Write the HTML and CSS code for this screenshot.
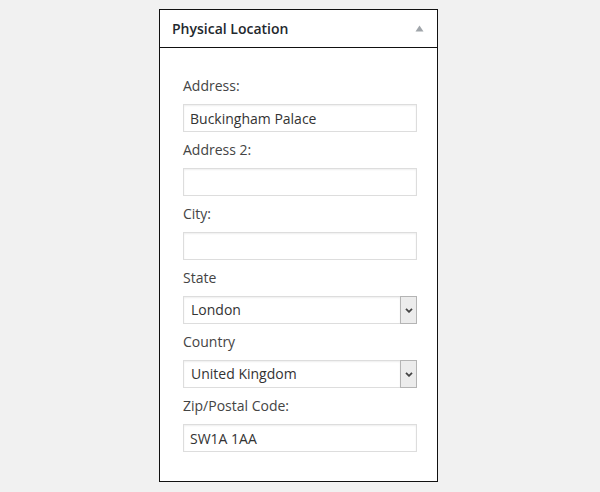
FILE: index.html
```html
<!DOCTYPE html>
<html>
<head>
<meta charset="utf-8">
<link rel="stylesheet" href="styles.css">
</head>
<body>
<div class="panel">
  <div class="panel-head">
    <h2 class="panel-title">Physical Location</h2>
    <span class="toggle"><svg width="9" height="7" viewBox="0 0 9 7"><path d="M4.5 0.5 L8.5 6.5 L0.5 6.5 Z" fill="#a0a5aa"/></svg></span>
  </div>
  <div class="panel-body">
    <label class="field-label">Address:</label>
    <input class="text-input" type="text" value="Buckingham Palace">
    <label class="field-label">Address 2:</label>
    <input class="text-input" type="text" value="">
    <label class="field-label">City:</label>
    <input class="text-input" type="text" value="">
    <label class="field-label">State</label>
    <div class="select-wrap">
      <div class="select-value">London</div>
      <div class="select-arrow"><svg width="8" height="5" viewBox="0 0 8 5"><path d="M1 0.8 L4 3.8 L7 0.8" fill="none" stroke="#444" stroke-width="1.8"/></svg></div>
    </div>
    <label class="field-label">Country</label>
    <div class="select-wrap">
      <div class="select-value">United Kingdom</div>
      <div class="select-arrow"><svg width="8" height="5" viewBox="0 0 8 5"><path d="M1 0.8 L4 3.8 L7 0.8" fill="none" stroke="#444" stroke-width="1.8"/></svg></div>
    </div>
    <label class="field-label">Zip/Postal Code:</label>
    <input class="text-input" type="text" value="SW1A 1AA">
  </div>
</div>
</body>
</html>
```
FILE: styles.css
```css
html, body {
  margin: 0;
  padding: 0;
  background: #f1f1f1;
  font-family: "Open Sans", "Liberation Sans", sans-serif;
}
body {
  padding-top: 9px;
  padding-left: 159px;
}
.panel {
  width: 277px;
  border: 1px solid #111;
  background: #fff;
}
.panel-head {
  height: 37px;
  border-bottom: 1px solid #111;
  display: flex;
  align-items: center;
  justify-content: space-between;
  padding: 0 13px 0 12px;
}
.panel-title {
  margin: 0;
  font-size: 14px;
  font-weight: 600;
  color: #23282d;
  line-height: 20px;
}
.toggle {
  display: flex;
  align-items: center;
  height: 10px;
}
.panel-body {
  padding: 28px 20px 29px 23px;
  display: flex;
  flex-direction: column;
}
.field-label {
  display: block;
  font-size: 14px;
  line-height: 20px;
  color: #444;
  margin: 8px 0 8px 0;
}
.field-label:first-child {
  margin-top: 0;
}
.text-input {
  box-sizing: border-box;
  width: 234px;
  height: 28px;
  margin: 0;
  border: 1px solid #ddd;
  box-shadow: inset 0 1px 2px rgba(0,0,0,0.07);
  padding: 0 6px;
  font-family: "Open Sans", "Liberation Sans", sans-serif;
  font-size: 14px;
  color: #333;
  background: #fff;
  outline: none;
}
.select-wrap {
  display: flex;
  width: 234px;
  height: 28px;
  box-sizing: border-box;
}
.select-value {
  flex: 1;
  box-sizing: border-box;
  border: 1px solid #ddd;
  border-right: none;
  box-shadow: inset 0 1px 2px rgba(0,0,0,0.07);
  padding: 0 7px;
  font-size: 14px;
  line-height: 26px;
  color: #333;
}
.select-arrow {
  width: 17px;
  box-sizing: border-box;
  border: 1px solid #b4b4b4;
  background: #ececec;
  display: flex;
  align-items: center;
  justify-content: center;
}
```
